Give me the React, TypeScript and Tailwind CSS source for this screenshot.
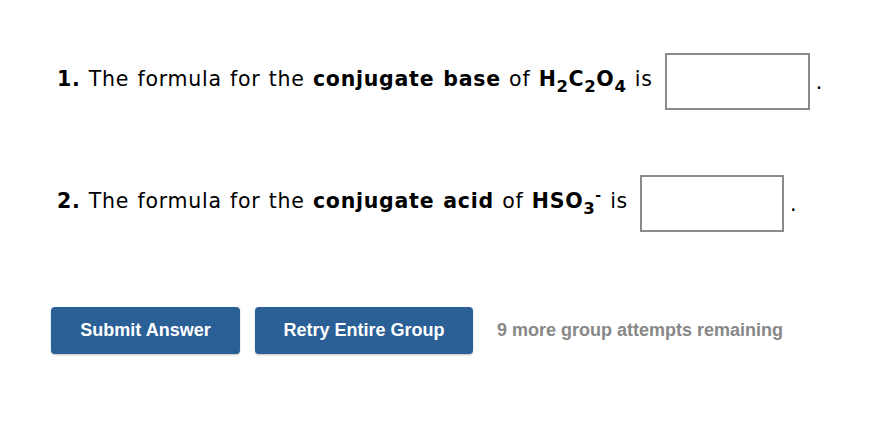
function Sub({ children }: { children: React.ReactNode }) {
  return <span className="relative top-[6px] text-[16.5px] tracking-[0.5px]">{children}</span>;
}

export default function App() {
  const q = "font-['DejaVu_Sans',Verdana,sans-serif] text-[20.5px] tracking-[0.75px] [word-spacing:1px] text-black";
  return (
    <div className="w-[892px] h-[434px] bg-white pl-[57px] pt-[53px]">
      <div className={`flex items-center ${q}`}>
        <span className="-mt-[4px]">
          <b>1.</b> The formula for the <b>conjugate base</b> of{" "}
          <b>
            H<Sub>2</Sub>C<Sub>2</Sub>O<Sub>4</Sub>
          </b>{" "}
          is
        </span>
        <div className="ml-[12px] w-[145px] h-[57px] border-2 border-[#8a8a8a]" />
        <span className="ml-[6px] self-end mb-[12px]">.</span>
      </div>
      <div className={`flex items-center mt-[65px] ${q}`}>
        <span className="-mt-[4px]">
          <b>2.</b> The formula for the <b>conjugate acid</b> of{" "}
          <b>
            HSO<Sub>3</Sub>
            <span className="relative -top-[8px] text-[14px]">-</span>
          </b>{" "}
          is
        </span>
        <div className="ml-[12px] w-[144px] h-[57px] border-2 border-[#8a8a8a]" />
        <span className="ml-[6px] self-end mb-[12px]">.</span>
      </div>
      <div className="flex items-center mt-[75px] -ml-[6px] font-['Liberation_Sans',Arial,sans-serif]">
        <button className="w-[189px] h-[47px] rounded-[4px] bg-[#2a6096] text-white font-bold text-[18px] shadow-[0_1px_2px_rgba(0,0,0,0.25)]">
          Submit Answer
        </button>
        <button className="ml-[15px] w-[218px] h-[47px] rounded-[4px] bg-[#2a6096] text-white font-bold text-[18px] shadow-[0_1px_2px_rgba(0,0,0,0.25)]">
          Retry Entire Group
        </button>
        <span className="ml-[24px] text-[#888888] font-bold text-[18px]">9 more group attempts remaining</span>
      </div>
    </div>
  );
}
